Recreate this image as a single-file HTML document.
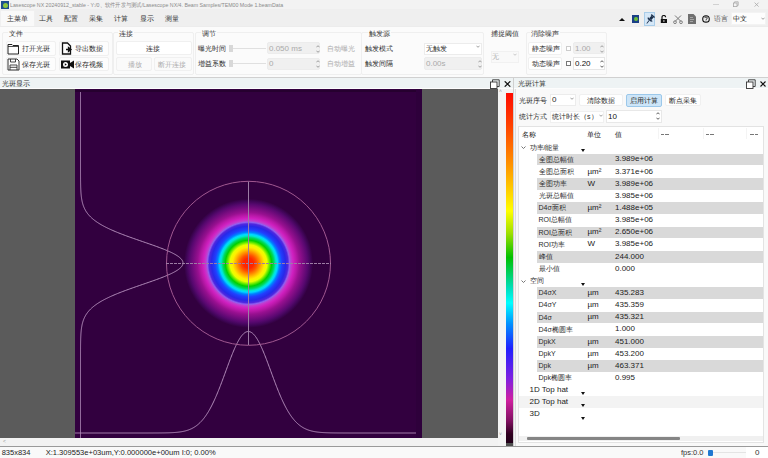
<!DOCTYPE html>
<html><head><meta charset="utf-8">
<style>
*{margin:0;padding:0;box-sizing:border-box}
html,body{width:768px;height:458px;overflow:hidden;background:#f3f3f3;font-family:"Liberation Sans",sans-serif;font-size:8px;color:#222}
.a{position:absolute}
.t{position:absolute;white-space:nowrap;line-height:1}
.gb{border:1px solid #efefef;border-radius:2px}
.lbl{font-size:7px;color:#333;background:#fbfbfb;padding:0 1px}
.btn{border:1px solid #f0f0f0;background:#fdfdfd;border-radius:2px}
.bt{font-size:7px;color:#2a2a2a}
.dis{color:#aaa}
.spin{background:#f0f0f0;border:1px solid #ececec;border-radius:2px}
.arr{font-size:6px;color:#888}
i{font-style:normal;display:inline-block;width:1em;text-align:center}
</style></head><body>
<!-- title bar -->
<div class="a" style="left:0;top:0;width:768px;height:11px;background:#f3f3f3"></div>
<div class="a" style="left:1px;top:1px;width:8px;height:8px;background:#1d4f8f"></div>
<div class="a" style="left:2.5px;top:2.5px;width:5px;height:5px;border-radius:50%;background:#8cc63f"></div>
<div class="t" style="left:9.6px;top:2px;font-size:6px;color:#8a8a8a;transform:scaleX(0.875);transform-origin:0 0">Lasescope NX 20240912_stable - Y:/0<i>、</i><i>软</i><i>件</i><i>开</i><i>发</i><i>与</i><i>测</i><i>试</i>/Lasescope NX/4. Beam Samples/TEM00 Mode 1.beamData</div>
<svg class="a" style="left:700px;top:0" width="68" height="10" viewBox="0 0 68 10"><path d="M13 4.5h6" stroke="#c8c8c8" stroke-width="0.8"/><rect x="33.4" y="3" width="3.6" height="3.6" fill="none" stroke="#a8a8a8" stroke-width="0.8"/><path d="M34.6 3V1.8h3.6v3.6H37" fill="none" stroke="#a8a8a8" stroke-width="0.8"/><path d="M54.6 2.6l4 4M58.6 2.6l-4 4" stroke="#a8a8a8" stroke-width="0.8"/></svg>



<!-- menu bar -->
<div class="a" style="left:0;top:9px;width:768px;height:17px;background:#efefef"></div>
<div class="a" style="left:0;top:10px;width:35px;height:17px;background:#f9f9f9;border:1px solid #f0f0f0;border-bottom:none"></div>
<div class="t" style="left:7.3px;top:14.8px;font-size:7px;color:#333"><i>主</i><i>菜</i><i>单</i></div>
<div class="t" style="left:39px;top:14.8px;font-size:7px;color:#333"><i>工</i><i>具</i></div>
<div class="t" style="left:64px;top:14.8px;font-size:7px;color:#333"><i>配</i><i>置</i></div>
<div class="t" style="left:89px;top:14.8px;font-size:7px;color:#333"><i>采</i><i>集</i></div>
<div class="t" style="left:114px;top:14.8px;font-size:7px;color:#333"><i>计</i><i>算</i></div>
<div class="t" style="left:140px;top:14.8px;font-size:7px;color:#333"><i>显</i><i>示</i></div>
<div class="t" style="left:165px;top:14.8px;font-size:7px;color:#333"><i>测</i><i>量</i></div>

<!-- ribbon -->
<div class="a" style="left:0;top:26px;width:768px;height:52px;background:#fbfbfb;border-top:1px solid #ececec;border-bottom:1px solid #d0d0d0"></div>


<!-- ribbon groups -->
<div class="a gb" style="left:2px;top:32px;width:111px;height:43px"></div>
<div class="t lbl" style="left:8px;top:30px"><i>文</i><i>件</i></div>
<div class="a btn" style="left:6px;top:41px;width:50px;height:15px"></div>
<div class="a btn" style="left:59px;top:41px;width:50px;height:15px"></div>
<div class="a btn" style="left:6px;top:57px;width:50px;height:14px"></div>
<div class="a btn" style="left:59px;top:57px;width:50px;height:14px"></div>
<svg class="a" style="left:7px;top:42px" width="13" height="13" viewBox="0 0 13 13"><path d="M1 2.5h4l1 1h5.5v8.5H1z" fill="none" stroke="#222" stroke-width="1"/><path d="M1 4.5h11" stroke="#222" stroke-width="0.8"/></svg>
<div class="t bt" style="left:22px;top:45px"><i>打</i><i>开</i><i>光</i><i>斑</i></div>
<svg class="a" style="left:61px;top:42px" width="12" height="13" viewBox="0 0 12 13"><path d="M1.5 1h5l3 3v8H1.5z" fill="none" stroke="#111" stroke-width="1.3"/><path d="M5 7.5h4M7.5 5.5l2.5 2-2.5 2z" stroke="#111" stroke-width="1.3" fill="#111"/></svg>
<div class="t bt" style="left:75px;top:45px"><i>导</i><i>出</i><i>数</i><i>据</i></div>
<svg class="a" style="left:7px;top:58px" width="13" height="13" viewBox="0 0 13 13"><path d="M1 1h9l2 2v9H1z" fill="none" stroke="#333" stroke-width="1"/><path d="M3.5 1v3h5V1M3 7h7v5M3 7v5M3 9.3h7" fill="none" stroke="#333" stroke-width="0.9"/></svg>
<div class="t bt" style="left:22px;top:61px"><i>保</i><i>存</i><i>光</i><i>斑</i></div>
<svg class="a" style="left:61px;top:60px" width="13" height="9" viewBox="0 0 13 9"><rect x="0" y="0.5" width="9" height="8" fill="#111"/><path d="M9 3l4-2.5v8L9 6z" fill="#111"/><circle cx="4.5" cy="4.5" r="2.5" fill="#fff"/><path d="M3.8 3.2v2.6l2-1.3z" fill="#111"/></svg>
<div class="t bt" style="left:75px;top:61px"><i>保</i><i>存</i><i>视</i><i>频</i></div>

<div class="a gb" style="left:113px;top:32px;width:81px;height:43px"></div>
<div class="t lbl" style="left:118px;top:30px"><i>连</i><i>接</i></div>
<div class="a btn" style="left:116px;top:41px;width:76px;height:14px;background:#fff"></div>
<div class="t bt" style="left:146px;top:45px"><i>连</i><i>接</i></div>
<div class="a btn" style="left:116px;top:57px;width:36px;height:14px;background:#fafafa"></div>
<div class="a btn" style="left:154px;top:57px;width:38px;height:14px;background:#fafafa"></div>
<div class="t bt dis" style="left:128px;top:61px"><i>播</i><i>放</i></div>
<div class="t bt dis" style="left:158px;top:61px"><i>断</i><i>开</i><i>连</i><i>接</i></div>

<div class="a gb" style="left:195px;top:32px;width:167px;height:43px"></div>
<div class="t lbl" style="left:201px;top:30px"><i>调</i><i>节</i></div>
<div class="t bt" style="left:198px;top:45px"><i>曝</i><i>光</i><i>时</i><i>间</i></div>
<div class="t bt" style="left:198px;top:60px"><i>增</i><i>益</i><i>系</i><i>数</i></div>
<div class="a" style="left:229px;top:45px;width:4px;height:7px;background:#d8d8d8"></div>
<div class="a" style="left:233px;top:48px;width:33px;height:1px;background:#e0e0e0"></div>
<div class="a" style="left:229px;top:60px;width:4px;height:7px;background:#d8d8d8"></div>
<div class="a" style="left:233px;top:63px;width:33px;height:1px;background:#e0e0e0"></div>
<div class="a spin" style="left:267px;top:42px;width:53px;height:12px"></div>
<div class="t bt dis" style="left:269px;top:45px;font-size:8px">0.050 ms</div>
<div class="a spin" style="left:267px;top:58px;width:53px;height:12px"></div>
<div class="t bt dis" style="left:269px;top:60px;font-size:8px">0</div>
<svg class="a" style="left:315.5px;top:45.0px" width="4" height="3" viewBox="0 0 4 3"><path d="M.4 2.3L2 .7l1.6 1.6" fill="none" stroke="#888" stroke-width="0.8"/></svg><svg class="a" style="left:315.5px;top:50.0px" width="4" height="3" viewBox="0 0 4 3"><path d="M.4 .7L2 2.3l1.6-1.6" fill="none" stroke="#888" stroke-width="0.8"/></svg>
<svg class="a" style="left:315.5px;top:60.0px" width="4" height="3" viewBox="0 0 4 3"><path d="M.4 2.3L2 .7l1.6 1.6" fill="none" stroke="#888" stroke-width="0.8"/></svg><svg class="a" style="left:315.5px;top:65.0px" width="4" height="3" viewBox="0 0 4 3"><path d="M.4 .7L2 2.3l1.6-1.6" fill="none" stroke="#888" stroke-width="0.8"/></svg>
<div class="t bt dis" style="left:327px;top:45px"><i>自</i><i>动</i><i>曝</i><i>光</i></div>
<div class="t bt dis" style="left:327px;top:60px"><i>自</i><i>动</i><i>增</i><i>益</i></div>

<div class="a gb" style="left:361px;top:32px;width:123px;height:43px"></div>
<div class="t lbl" style="left:368px;top:30px"><i>触</i><i>发</i><i>源</i></div>
<div class="t bt" style="left:365px;top:45px"><i>触</i><i>发</i><i>模</i><i>式</i></div>
<div class="t bt" style="left:365px;top:60px"><i>触</i><i>发</i><i>间</i><i>隔</i></div>
<div class="a" style="left:424px;top:43px;width:58px;height:12px;background:#fff;border:1px solid #ececec"></div>
<div class="t bt" style="left:426px;top:45px"><i>无</i><i>触</i><i>发</i></div>
<svg class="a" style="left:475.5px;top:45.0px" width="4" height="3" viewBox="0 0 4 3"><path d="M.4 .7L2 2.3l1.6-1.6" fill="none" stroke="#888" stroke-width="0.8"/></svg>
<div class="a spin" style="left:424px;top:57px;width:58px;height:13px"></div>
<div class="t bt dis" style="left:426px;top:60px;font-size:8px">0.00s</div>
<svg class="a" style="left:477.5px;top:60.0px" width="4" height="3" viewBox="0 0 4 3"><path d="M.4 2.3L2 .7l1.6 1.6" fill="none" stroke="#888" stroke-width="0.8"/></svg><svg class="a" style="left:477.5px;top:65.0px" width="4" height="3" viewBox="0 0 4 3"><path d="M.4 .7L2 2.3l1.6-1.6" fill="none" stroke="#888" stroke-width="0.8"/></svg>

<div class="t lbl" style="left:490px;top:30px"><i>捕</i><i>捉</i><i>阈</i><i>值</i></div>
<div class="a" style="left:491px;top:51px;width:28px;height:12px;background:#f9f9f9;border:1px solid #f1f1f1"></div>
<div class="t bt dis" style="left:492px;top:53px"><i>无</i></div>
<svg class="a" style="left:512.5px;top:53.0px" width="4" height="3" viewBox="0 0 4 3"><path d="M.4 .7L2 2.3l1.6-1.6" fill="none" stroke="#bbb" stroke-width="0.8"/></svg>

<div class="a gb" style="left:526px;top:32px;width:81px;height:43px"></div>
<div class="t lbl" style="left:530px;top:30px"><i>消</i><i>除</i><i>噪</i><i>声</i></div>
<div class="a btn" style="left:528px;top:42px;width:34px;height:13px;background:#fff"></div>
<div class="a btn" style="left:528px;top:57px;width:34px;height:13px;background:#fff"></div>
<div class="t bt" style="left:532px;top:45px"><i>静</i><i>态</i><i>噪</i><i>声</i></div>
<div class="t bt" style="left:532px;top:60px"><i>动</i><i>态</i><i>噪</i><i>声</i></div>
<div class="a" style="left:565.5px;top:46px;width:5px;height:5px;border:0.8px solid #ccc;background:#fff"></div>
<div class="a" style="left:565.5px;top:61px;width:5px;height:5px;border:0.8px solid #777;background:#fff"></div>
<div class="a spin" style="left:573px;top:42px;width:32px;height:12px"></div>
<div class="t bt dis" style="left:575px;top:45px;font-size:8px">1.00</div>
<div class="a" style="left:573px;top:57px;width:32px;height:13px;background:#fff;border:1px solid #e6e6e6"></div>
<div class="t bt" style="left:575px;top:60px;font-size:8px;color:#111">0.20</div>
<svg class="a" style="left:599.5px;top:45.0px" width="4" height="3" viewBox="0 0 4 3"><path d="M.4 2.3L2 .7l1.6 1.6" fill="none" stroke="#888" stroke-width="0.8"/></svg><svg class="a" style="left:599.5px;top:50.0px" width="4" height="3" viewBox="0 0 4 3"><path d="M.4 .7L2 2.3l1.6-1.6" fill="none" stroke="#888" stroke-width="0.8"/></svg>
<svg class="a" style="left:599.5px;top:60.0px" width="4" height="3" viewBox="0 0 4 3"><path d="M.4 2.3L2 .7l1.6 1.6" fill="none" stroke="#333" stroke-width="0.8"/></svg><svg class="a" style="left:599.5px;top:65.0px" width="4" height="3" viewBox="0 0 4 3"><path d="M.4 .7L2 2.3l1.6-1.6" fill="none" stroke="#333" stroke-width="0.8"/></svg>

<!-- left dock header -->
<div class="a" style="left:0;top:78px;width:513px;height:10px;background:#eef3f4"></div>
<div class="t" style="left:2.3px;top:80px;font-size:7px;color:#333"><i>光</i><i>斑</i><i>显</i><i>示</i></div>
<!-- right dock header -->
<div class="a" style="left:514px;top:78px;width:254px;height:10px;background:#eef3f4"></div>
<div class="t" style="left:517.5px;top:80px;font-size:7px;color:#333"><i>光</i><i>斑</i><i>计</i><i>算</i></div>

<!-- display -->
<div class="a" style="left:0;top:88px;width:768px;height:1px;background:#fdfdfd"></div>
<div class="a" style="left:0;top:89px;width:498px;height:349px;background:#5b5b5b"></div>
<div class="a" style="left:75px;top:89px;width:347px;height:349px;background:#32003f"></div>

<div class="a" style="left:75px;top:89px;width:347px;height:349px;background:radial-gradient(circle at 173.5px 174.3px,#ff2000 0px,#ff2800 5px,#ff5000 8px,#ff8c00 11px,#ffc000 13.5px,#ffee00 16px,#e8ff00 18.5px,#60e800 21px,#00d000 23px,#00d860 25.5px,#00e8d0 27.5px,#00d8ff 29px,#0080ff 31px,#2040ff 33.5px,#2828e8 37px,#5028e0 39.5px,#9060f0 41px,#c040d0 42.5px,#d020c0 45px,#b818a8 48px,#981090 51px,#780c80 55px,#580870 59px,#400558 62px,#32003f 64.5px)"></div>
<svg class="a" style="left:0;top:0" width="768" height="458" viewBox="0 0 768 458">
<g fill="none">
<path d="M80.50 90.0 L80.50 90.5 L80.50 91.0 L80.50 91.5 L80.50 92.0 L80.50 92.5 L80.50 93.0 L80.50 93.5 L80.50 94.0 L80.50 94.5 L80.50 95.0 L80.50 95.5 L80.50 96.0 L80.50 96.5 L80.50 97.0 L80.50 97.5 L80.50 98.0 L80.50 98.5 L80.50 99.0 L80.50 99.5 L80.50 100.0 L80.50 100.5 L80.50 101.0 L80.50 101.5 L80.50 102.0 L80.50 102.5 L80.50 103.0 L80.50 103.5 L80.50 104.0 L80.50 104.5 L80.50 105.0 L80.50 105.5 L80.50 106.0 L80.50 106.5 L80.50 107.0 L80.50 107.5 L80.50 108.0 L80.50 108.5 L80.50 109.0 L80.50 109.5 L80.50 110.0 L80.50 110.5 L80.50 111.0 L80.50 111.5 L80.50 112.0 L80.50 112.5 L80.50 113.0 L80.50 113.5 L80.50 114.0 L80.50 114.5 L80.50 115.0 L80.50 115.5 L80.50 116.0 L80.50 116.5 L80.50 117.0 L80.50 117.5 L80.50 118.0 L80.50 118.5 L80.50 119.0 L80.50 119.5 L80.50 120.0 L80.50 120.5 L80.50 121.0 L80.50 121.5 L80.50 122.0 L80.50 122.5 L80.50 123.0 L80.50 123.5 L80.50 124.0 L80.50 124.5 L80.50 125.0 L80.50 125.5 L80.50 126.0 L80.50 126.5 L80.50 127.0 L80.50 127.5 L80.50 128.0 L80.50 128.5 L80.50 129.0 L80.50 129.5 L80.50 130.0 L80.50 130.5 L80.50 131.0 L80.50 131.5 L80.50 132.0 L80.50 132.5 L80.50 133.0 L80.50 133.5 L80.50 134.0 L80.50 134.5 L80.50 135.0 L80.50 135.5 L80.50 136.0 L80.50 136.5 L80.50 137.0 L80.50 137.5 L80.50 138.0 L80.50 138.5 L80.50 139.0 L80.50 139.5 L80.50 140.0 L80.50 140.5 L80.50 141.0 L80.50 141.5 L80.50 142.0 L80.50 142.5 L80.50 143.0 L80.50 143.5 L80.50 144.0 L80.50 144.5 L80.50 145.0 L80.50 145.5 L80.50 146.0 L80.50 146.5 L80.50 147.0 L80.50 147.5 L80.50 148.0 L80.50 148.5 L80.50 149.0 L80.50 149.5 L80.50 150.0 L80.50 150.5 L80.50 151.0 L80.50 151.5 L80.50 152.0 L80.50 152.5 L80.50 153.0 L80.50 153.5 L80.50 154.0 L80.50 154.5 L80.50 155.0 L80.50 155.5 L80.50 156.0 L80.50 156.5 L80.50 157.0 L80.50 157.5 L80.50 158.0 L80.50 158.5 L80.50 159.0 L80.50 159.5 L80.50 160.0 L80.50 160.5 L80.50 161.0 L80.50 161.5 L80.50 162.0 L80.50 162.5 L80.50 163.0 L80.50 163.5 L80.50 164.0 L80.50 164.5 L80.50 165.0 L80.50 165.5 L80.50 166.0 L80.50 166.5 L80.50 167.0 L80.50 167.5 L80.51 168.0 L80.51 168.5 L80.51 169.0 L80.51 169.5 L80.51 170.0 L80.51 170.5 L80.51 171.0 L80.51 171.5 L80.51 172.0 L80.51 172.5 L80.51 173.0 L80.52 173.5 L80.52 174.0 L80.52 174.5 L80.52 175.0 L80.52 175.5 L80.53 176.0 L80.53 176.5 L80.53 177.0 L80.54 177.5 L80.54 178.0 L80.54 178.5 L80.55 179.0 L80.55 179.5 L80.56 180.0 L80.56 180.5 L80.57 181.0 L80.57 181.5 L80.58 182.0 L80.59 182.5 L80.59 183.0 L80.60 183.5 L80.61 184.0 L80.62 184.5 L80.63 185.0 L80.65 185.5 L80.66 186.0 L80.67 186.5 L80.69 187.0 L80.70 187.5 L80.72 188.0 L80.74 188.5 L80.76 189.0 L80.78 189.5 L80.80 190.0 L80.83 190.5 L80.86 191.0 L80.89 191.5 L80.92 192.0 L80.95 192.5 L80.99 193.0 L81.03 193.5 L81.07 194.0 L81.11 194.5 L81.16 195.0 L81.21 195.5 L81.26 196.0 L81.32 196.5 L81.38 197.0 L81.45 197.5 L81.52 198.0 L81.59 198.5 L81.67 199.0 L81.76 199.5 L81.85 200.0 L81.94 200.5 L82.04 201.0 L82.15 201.5 L82.26 202.0 L82.38 202.5 L82.51 203.0 L82.65 203.5 L82.79 204.0 L82.94 204.5 L83.10 205.0 L83.27 205.5 L83.45 206.0 L83.64 206.5 L83.84 207.0 L84.05 207.5 L84.27 208.0 L84.50 208.5 L84.75 209.0 L85.00 209.5 L85.27 210.0 L85.56 210.5 L85.85 211.0 L86.16 211.5 L86.49 212.0 L86.83 212.5 L87.19 213.0 L87.56 213.5 L87.95 214.0 L88.36 214.5 L88.78 215.0 L89.23 215.5 L89.69 216.0 L90.17 216.5 L90.67 217.0 L91.19 217.5 L91.73 218.0 L92.30 218.5 L92.88 219.0 L93.49 219.5 L94.11 220.0 L94.76 220.5 L95.44 221.0 L96.14 221.5 L96.86 222.0 L97.60 222.5 L98.37 223.0 L99.16 223.5 L99.98 224.0 L100.82 224.5 L101.69 225.0 L102.58 225.5 L103.49 226.0 L104.43 226.5 L105.40 227.0 L106.39 227.5 L107.41 228.0 L108.45 228.5 L109.51 229.0 L110.60 229.5 L111.71 230.0 L112.85 230.5 L114.01 231.0 L115.19 231.5 L116.40 232.0 L117.62 232.5 L118.87 233.0 L120.14 233.5 L121.42 234.0 L122.73 234.5 L124.05 235.0 L125.39 235.5 L126.74 236.0 L128.11 236.5 L129.50 237.0 L130.90 237.5 L132.31 238.0 L133.72 238.5 L135.15 239.0 L136.59 239.5 L138.03 240.0 L139.48 240.5 L140.93 241.0 L142.38 241.5 L143.83 242.0 L145.28 242.5 L146.73 243.0 L148.17 243.5 L149.61 244.0 L151.04 244.5 L152.46 245.0 L153.87 245.5 L155.26 246.0 L156.64 246.5 L158.01 247.0 L159.35 247.5 L160.67 248.0 L161.98 248.5 L163.25 249.0 L164.51 249.5 L165.73 250.0 L166.92 250.5 L168.09 251.0 L169.22 251.5 L170.32 252.0 L171.38 252.5 L172.40 253.0 L173.38 253.5 L174.32 254.0 L175.23 254.5 L176.08 255.0 L176.89 255.5 L177.66 256.0 L178.38 256.5 L179.05 257.0 L179.67 257.5 L180.24 258.0 L180.76 258.5 L181.22 259.0 L181.64 259.5 L182.00 260.0 L182.30 260.5 L182.55 261.0 L182.75 261.5 L182.89 262.0 L182.97 262.5 L183.00 263.0 L182.97 263.5 L182.89 264.0 L182.75 264.5 L182.55 265.0 L182.30 265.5 L182.00 266.0 L181.64 266.5 L181.22 267.0 L180.76 267.5 L180.24 268.0 L179.67 268.5 L179.05 269.0 L178.38 269.5 L177.66 270.0 L176.89 270.5 L176.08 271.0 L175.23 271.5 L174.32 272.0 L173.38 272.5 L172.40 273.0 L171.38 273.5 L170.32 274.0 L169.22 274.5 L168.09 275.0 L166.92 275.5 L165.73 276.0 L164.51 276.5 L163.25 277.0 L161.98 277.5 L160.67 278.0 L159.35 278.5 L158.01 279.0 L156.64 279.5 L155.26 280.0 L153.87 280.5 L152.46 281.0 L151.04 281.5 L149.61 282.0 L148.17 282.5 L146.73 283.0 L145.28 283.5 L143.83 284.0 L142.38 284.5 L140.93 285.0 L139.48 285.5 L138.03 286.0 L136.59 286.5 L135.15 287.0 L133.72 287.5 L132.31 288.0 L130.90 288.5 L129.50 289.0 L128.11 289.5 L126.74 290.0 L125.39 290.5 L124.05 291.0 L122.73 291.5 L121.42 292.0 L120.14 292.5 L118.87 293.0 L117.62 293.5 L116.40 294.0 L115.19 294.5 L114.01 295.0 L112.85 295.5 L111.71 296.0 L110.60 296.5 L109.51 297.0 L108.45 297.5 L107.41 298.0 L106.39 298.5 L105.40 299.0 L104.43 299.5 L103.49 300.0 L102.58 300.5 L101.69 301.0 L100.82 301.5 L99.98 302.0 L99.16 302.5 L98.37 303.0 L97.60 303.5 L96.86 304.0 L96.14 304.5 L95.44 305.0 L94.76 305.5 L94.11 306.0 L93.49 306.5 L92.88 307.0 L92.30 307.5 L91.73 308.0 L91.19 308.5 L90.67 309.0 L90.17 309.5 L89.69 310.0 L89.23 310.5 L88.78 311.0 L88.36 311.5 L87.95 312.0 L87.56 312.5 L87.19 313.0 L86.83 313.5 L86.49 314.0 L86.16 314.5 L85.85 315.0 L85.56 315.5 L85.27 316.0 L85.00 316.5 L84.75 317.0 L84.50 317.5 L84.27 318.0 L84.05 318.5 L83.84 319.0 L83.64 319.5 L83.45 320.0 L83.27 320.5 L83.10 321.0 L82.94 321.5 L82.79 322.0 L82.65 322.5 L82.51 323.0 L82.38 323.5 L82.26 324.0 L82.15 324.5 L82.04 325.0 L81.94 325.5 L81.85 326.0 L81.76 326.5 L81.67 327.0 L81.59 327.5 L81.52 328.0 L81.45 328.5 L81.38 329.0 L81.32 329.5 L81.26 330.0 L81.21 330.5 L81.16 331.0 L81.11 331.5 L81.07 332.0 L81.03 332.5 L80.99 333.0 L80.95 333.5 L80.92 334.0 L80.89 334.5 L80.86 335.0 L80.83 335.5 L80.80 336.0 L80.78 336.5 L80.76 337.0 L80.74 337.5 L80.72 338.0 L80.70 338.5 L80.69 339.0 L80.67 339.5 L80.66 340.0 L80.65 340.5 L80.63 341.0 L80.62 341.5 L80.61 342.0 L80.60 342.5 L80.59 343.0 L80.59 343.5 L80.58 344.0 L80.57 344.5 L80.57 345.0 L80.56 345.5 L80.56 346.0 L80.55 346.5 L80.55 347.0 L80.54 347.5 L80.54 348.0 L80.54 348.5 L80.53 349.0 L80.53 349.5 L80.53 350.0 L80.52 350.5 L80.52 351.0 L80.52 351.5 L80.52 352.0 L80.52 352.5 L80.51 353.0 L80.51 353.5 L80.51 354.0 L80.51 354.5 L80.51 355.0 L80.51 355.5 L80.51 356.0 L80.51 356.5 L80.51 357.0 L80.51 357.5 L80.51 358.0 L80.50 358.5 L80.50 359.0 L80.50 359.5 L80.50 360.0 L80.50 360.5 L80.50 361.0 L80.50 361.5 L80.50 362.0 L80.50 362.5 L80.50 363.0 L80.50 363.5 L80.50 364.0 L80.50 364.5 L80.50 365.0 L80.50 365.5 L80.50 366.0 L80.50 366.5 L80.50 367.0 L80.50 367.5 L80.50 368.0 L80.50 368.5 L80.50 369.0 L80.50 369.5 L80.50 370.0 L80.50 370.5 L80.50 371.0 L80.50 371.5 L80.50 372.0 L80.50 372.5 L80.50 373.0 L80.50 373.5 L80.50 374.0 L80.50 374.5 L80.50 375.0 L80.50 375.5 L80.50 376.0 L80.50 376.5 L80.50 377.0 L80.50 377.5 L80.50 378.0 L80.50 378.5 L80.50 379.0 L80.50 379.5 L80.50 380.0 L80.50 380.5 L80.50 381.0 L80.50 381.5 L80.50 382.0 L80.50 382.5 L80.50 383.0 L80.50 383.5 L80.50 384.0 L80.50 384.5 L80.50 385.0 L80.50 385.5 L80.50 386.0 L80.50 386.5 L80.50 387.0 L80.50 387.5 L80.50 388.0 L80.50 388.5 L80.50 389.0 L80.50 389.5 L80.50 390.0 L80.50 390.5 L80.50 391.0 L80.50 391.5 L80.50 392.0 L80.50 392.5 L80.50 393.0 L80.50 393.5 L80.50 394.0 L80.50 394.5 L80.50 395.0 L80.50 395.5 L80.50 396.0 L80.50 396.5 L80.50 397.0 L80.50 397.5 L80.50 398.0 L80.50 398.5 L80.50 399.0 L80.50 399.5 L80.50 400.0 L80.50 400.5 L80.50 401.0 L80.50 401.5 L80.50 402.0 L80.50 402.5 L80.50 403.0 L80.50 403.5 L80.50 404.0 L80.50 404.5 L80.50 405.0 L80.50 405.5 L80.50 406.0 L80.50 406.5 L80.50 407.0 L80.50 407.5 L80.50 408.0 L80.50 408.5 L80.50 409.0 L80.50 409.5 L80.50 410.0 L80.50 410.5 L80.50 411.0 L80.50 411.5 L80.50 412.0 L80.50 412.5 L80.50 413.0 L80.50 413.5 L80.50 414.0 L80.50 414.5 L80.50 415.0 L80.50 415.5 L80.50 416.0 L80.50 416.5 L80.50 417.0 L80.50 417.5 L80.50 418.0 L80.50 418.5 L80.50 419.0 L80.50 419.5 L80.50 420.0 L80.50 420.5 L80.50 421.0 L80.50 421.5 L80.50 422.0 L80.50 422.5 L80.50 423.0 L80.50 423.5 L80.50 424.0 L80.50 424.5 L80.50 425.0 L80.50 425.5 L80.50 426.0 L80.50 426.5 L80.50 427.0 L80.50 427.5 L80.50 428.0 L80.50 428.5 L80.50 429.0 L80.50 429.5 L80.50 430.0 L80.50 430.5 L80.50 431.0 L80.50 431.5 L80.50 432.0 L80.50 432.5 L80.50 433.0 L80.50 433.5 L80.50 434.0 L80.50 434.5 L80.50 435.0 L80.50 435.5 L80.50 436.0 L80.50 436.5 L80.50 437.0 L80.50 437.5 L80.50 438.0" stroke="#b894c0" stroke-width="0.95"/>
<path d="M75.0 433.00 L75.5 433.00 L76.0 433.00 L76.5 433.00 L77.0 433.00 L77.5 433.00 L78.0 433.00 L78.5 433.00 L79.0 433.00 L79.5 433.00 L80.0 433.00 L80.5 433.00 L81.0 433.00 L81.5 433.00 L82.0 433.00 L82.5 433.00 L83.0 433.00 L83.5 433.00 L84.0 433.00 L84.5 433.00 L85.0 433.00 L85.5 433.00 L86.0 433.00 L86.5 433.00 L87.0 433.00 L87.5 433.00 L88.0 433.00 L88.5 433.00 L89.0 433.00 L89.5 433.00 L90.0 433.00 L90.5 433.00 L91.0 433.00 L91.5 433.00 L92.0 433.00 L92.5 433.00 L93.0 433.00 L93.5 433.00 L94.0 433.00 L94.5 433.00 L95.0 433.00 L95.5 433.00 L96.0 433.00 L96.5 433.00 L97.0 433.00 L97.5 433.00 L98.0 433.00 L98.5 433.00 L99.0 433.00 L99.5 433.00 L100.0 433.00 L100.5 433.00 L101.0 433.00 L101.5 433.00 L102.0 433.00 L102.5 433.00 L103.0 433.00 L103.5 433.00 L104.0 433.00 L104.5 433.00 L105.0 433.00 L105.5 433.00 L106.0 433.00 L106.5 433.00 L107.0 433.00 L107.5 433.00 L108.0 433.00 L108.5 433.00 L109.0 433.00 L109.5 433.00 L110.0 433.00 L110.5 433.00 L111.0 433.00 L111.5 433.00 L112.0 433.00 L112.5 433.00 L113.0 433.00 L113.5 433.00 L114.0 433.00 L114.5 433.00 L115.0 433.00 L115.5 433.00 L116.0 433.00 L116.5 433.00 L117.0 433.00 L117.5 433.00 L118.0 433.00 L118.5 433.00 L119.0 433.00 L119.5 433.00 L120.0 433.00 L120.5 433.00 L121.0 433.00 L121.5 433.00 L122.0 433.00 L122.5 433.00 L123.0 433.00 L123.5 433.00 L124.0 433.00 L124.5 433.00 L125.0 433.00 L125.5 433.00 L126.0 433.00 L126.5 433.00 L127.0 433.00 L127.5 433.00 L128.0 433.00 L128.5 433.00 L129.0 433.00 L129.5 433.00 L130.0 433.00 L130.5 433.00 L131.0 433.00 L131.5 433.00 L132.0 433.00 L132.5 433.00 L133.0 433.00 L133.5 433.00 L134.0 433.00 L134.5 433.00 L135.0 433.00 L135.5 433.00 L136.0 433.00 L136.5 433.00 L137.0 433.00 L137.5 433.00 L138.0 433.00 L138.5 433.00 L139.0 433.00 L139.5 433.00 L140.0 433.00 L140.5 433.00 L141.0 433.00 L141.5 433.00 L142.0 433.00 L142.5 433.00 L143.0 433.00 L143.5 433.00 L144.0 433.00 L144.5 433.00 L145.0 433.00 L145.5 433.00 L146.0 433.00 L146.5 433.00 L147.0 433.00 L147.5 433.00 L148.0 432.99 L148.5 432.99 L149.0 432.99 L149.5 432.99 L150.0 432.99 L150.5 432.99 L151.0 432.99 L151.5 432.99 L152.0 432.99 L152.5 432.99 L153.0 432.99 L153.5 432.98 L154.0 432.98 L154.5 432.98 L155.0 432.98 L155.5 432.98 L156.0 432.98 L156.5 432.97 L157.0 432.97 L157.5 432.97 L158.0 432.97 L158.5 432.96 L159.0 432.96 L159.5 432.95 L160.0 432.95 L160.5 432.95 L161.0 432.94 L161.5 432.94 L162.0 432.93 L162.5 432.92 L163.0 432.92 L163.5 432.91 L164.0 432.90 L164.5 432.90 L165.0 432.89 L165.5 432.88 L166.0 432.87 L166.5 432.85 L167.0 432.84 L167.5 432.83 L168.0 432.82 L168.5 432.80 L169.0 432.78 L169.5 432.77 L170.0 432.75 L170.5 432.73 L171.0 432.71 L171.5 432.68 L172.0 432.66 L172.5 432.63 L173.0 432.61 L173.5 432.58 L174.0 432.54 L174.5 432.51 L175.0 432.47 L175.5 432.43 L176.0 432.39 L176.5 432.35 L177.0 432.30 L177.5 432.25 L178.0 432.20 L178.5 432.14 L179.0 432.08 L179.5 432.01 L180.0 431.95 L180.5 431.87 L181.0 431.80 L181.5 431.71 L182.0 431.63 L182.5 431.54 L183.0 431.44 L183.5 431.34 L184.0 431.23 L184.5 431.11 L185.0 430.99 L185.5 430.86 L186.0 430.73 L186.5 430.59 L187.0 430.44 L187.5 430.28 L188.0 430.11 L188.5 429.94 L189.0 429.75 L189.5 429.56 L190.0 429.36 L190.5 429.14 L191.0 428.92 L191.5 428.69 L192.0 428.44 L192.5 428.18 L193.0 427.91 L193.5 427.63 L194.0 427.34 L194.5 427.03 L195.0 426.71 L195.5 426.37 L196.0 426.02 L196.5 425.66 L197.0 425.28 L197.5 424.88 L198.0 424.47 L198.5 424.04 L199.0 423.60 L199.5 423.14 L200.0 422.66 L200.5 422.16 L201.0 421.64 L201.5 421.11 L202.0 420.55 L202.5 419.98 L203.0 419.38 L203.5 418.77 L204.0 418.14 L204.5 417.48 L205.0 416.81 L205.5 416.11 L206.0 415.39 L206.5 414.65 L207.0 413.89 L207.5 413.10 L208.0 412.30 L208.5 411.47 L209.0 410.62 L209.5 409.75 L210.0 408.86 L210.5 407.94 L211.0 407.00 L211.5 406.04 L212.0 405.06 L212.5 404.05 L213.0 403.03 L213.5 401.98 L214.0 400.92 L214.5 399.83 L215.0 398.72 L215.5 397.59 L216.0 396.45 L216.5 395.28 L217.0 394.10 L217.5 392.90 L218.0 391.68 L218.5 390.45 L219.0 389.20 L219.5 387.94 L220.0 386.66 L220.5 385.37 L221.0 384.07 L221.5 382.75 L222.0 381.43 L222.5 380.10 L223.0 378.76 L223.5 377.41 L224.0 376.06 L224.5 374.70 L225.0 373.34 L225.5 371.98 L226.0 370.62 L226.5 369.26 L227.0 367.90 L227.5 366.54 L228.0 365.19 L228.5 363.85 L229.0 362.51 L229.5 361.19 L230.0 359.87 L230.5 358.57 L231.0 357.28 L231.5 356.00 L232.0 354.75 L232.5 353.51 L233.0 352.29 L233.5 351.09 L234.0 349.91 L234.5 348.76 L235.0 347.64 L235.5 346.54 L236.0 345.47 L236.5 344.43 L237.0 343.43 L237.5 342.45 L238.0 341.51 L238.5 340.61 L239.0 339.74 L239.5 338.91 L240.0 338.12 L240.5 337.37 L241.0 336.66 L241.5 335.99 L242.0 335.37 L242.5 334.79 L243.0 334.25 L243.5 333.76 L244.0 333.32 L244.5 332.92 L245.0 332.58 L245.5 332.28 L246.0 332.02 L246.5 331.82 L247.0 331.67 L247.5 331.56 L248.0 331.51 L248.5 331.50 L249.0 331.55 L249.5 331.64 L250.0 331.79 L250.5 331.98 L251.0 332.22 L251.5 332.51 L252.0 332.85 L252.5 333.24 L253.0 333.67 L253.5 334.15 L254.0 334.68 L254.5 335.25 L255.0 335.86 L255.5 336.52 L256.0 337.22 L256.5 337.97 L257.0 338.75 L257.5 339.57 L258.0 340.43 L258.5 341.33 L259.0 342.26 L259.5 343.23 L260.0 344.23 L260.5 345.26 L261.0 346.32 L261.5 347.42 L262.0 348.54 L262.5 349.68 L263.0 350.85 L263.5 352.05 L264.0 353.26 L264.5 354.50 L265.0 355.75 L265.5 357.02 L266.0 358.31 L266.5 359.61 L267.0 360.92 L267.5 362.25 L268.0 363.58 L268.5 364.92 L269.0 366.27 L269.5 367.63 L270.0 368.99 L270.5 370.35 L271.0 371.71 L271.5 373.07 L272.0 374.43 L272.5 375.79 L273.0 377.14 L273.5 378.49 L274.0 379.83 L274.5 381.16 L275.0 382.49 L275.5 383.80 L276.0 385.11 L276.5 386.40 L277.0 387.68 L277.5 388.95 L278.0 390.20 L278.5 391.44 L279.0 392.66 L279.5 393.86 L280.0 395.05 L280.5 396.22 L281.0 397.37 L281.5 398.50 L282.0 399.61 L282.5 400.70 L283.0 401.77 L283.5 402.82 L284.0 403.85 L284.5 404.86 L285.0 405.85 L285.5 406.81 L286.0 407.75 L286.5 408.67 L287.0 409.57 L287.5 410.45 L288.0 411.30 L288.5 412.14 L289.0 412.95 L289.5 413.73 L290.0 414.50 L290.5 415.24 L291.0 415.97 L291.5 416.67 L292.0 417.35 L292.5 418.01 L293.0 418.65 L293.5 419.26 L294.0 419.86 L294.5 420.44 L295.0 421.00 L295.5 421.54 L296.0 422.06 L296.5 422.56 L297.0 423.04 L297.5 423.51 L298.0 423.96 L298.5 424.39 L299.0 424.80 L299.5 425.20 L300.0 425.59 L300.5 425.95 L301.0 426.31 L301.5 426.64 L302.0 426.97 L302.5 427.28 L303.0 427.58 L303.5 427.86 L304.0 428.13 L304.5 428.39 L305.0 428.64 L305.5 428.87 L306.0 429.10 L306.5 429.32 L307.0 429.52 L307.5 429.72 L308.0 429.90 L308.5 430.08 L309.0 430.25 L309.5 430.41 L310.0 430.56 L310.5 430.70 L311.0 430.84 L311.5 430.97 L312.0 431.09 L312.5 431.20 L313.0 431.31 L313.5 431.42 L314.0 431.52 L314.5 431.61 L315.0 431.70 L315.5 431.78 L316.0 431.86 L316.5 431.93 L317.0 432.00 L317.5 432.07 L318.0 432.13 L318.5 432.18 L319.0 432.24 L319.5 432.29 L320.0 432.34 L320.5 432.38 L321.0 432.43 L321.5 432.46 L322.0 432.50 L322.5 432.54 L323.0 432.57 L323.5 432.60 L324.0 432.63 L324.5 432.65 L325.0 432.68 L325.5 432.70 L326.0 432.72 L326.5 432.74 L327.0 432.76 L327.5 432.78 L328.0 432.80 L328.5 432.81 L329.0 432.83 L329.5 432.84 L330.0 432.85 L330.5 432.86 L331.0 432.87 L331.5 432.88 L332.0 432.89 L332.5 432.90 L333.0 432.91 L333.5 432.92 L334.0 432.92 L334.5 432.93 L335.0 432.94 L335.5 432.94 L336.0 432.95 L336.5 432.95 L337.0 432.95 L337.5 432.96 L338.0 432.96 L338.5 432.96 L339.0 432.97 L339.5 432.97 L340.0 432.97 L340.5 432.98 L341.0 432.98 L341.5 432.98 L342.0 432.98 L342.5 432.98 L343.0 432.98 L343.5 432.99 L344.0 432.99 L344.5 432.99 L345.0 432.99 L345.5 432.99 L346.0 432.99 L346.5 432.99 L347.0 432.99 L347.5 432.99 L348.0 432.99 L348.5 432.99 L349.0 433.00 L349.5 433.00 L350.0 433.00 L350.5 433.00 L351.0 433.00 L351.5 433.00 L352.0 433.00 L352.5 433.00 L353.0 433.00 L353.5 433.00 L354.0 433.00 L354.5 433.00 L355.0 433.00 L355.5 433.00 L356.0 433.00 L356.5 433.00 L357.0 433.00 L357.5 433.00 L358.0 433.00 L358.5 433.00 L359.0 433.00 L359.5 433.00 L360.0 433.00 L360.5 433.00 L361.0 433.00 L361.5 433.00 L362.0 433.00 L362.5 433.00 L363.0 433.00 L363.5 433.00 L364.0 433.00 L364.5 433.00 L365.0 433.00 L365.5 433.00 L366.0 433.00 L366.5 433.00 L367.0 433.00 L367.5 433.00 L368.0 433.00 L368.5 433.00 L369.0 433.00 L369.5 433.00 L370.0 433.00 L370.5 433.00 L371.0 433.00 L371.5 433.00 L372.0 433.00 L372.5 433.00 L373.0 433.00 L373.5 433.00 L374.0 433.00 L374.5 433.00 L375.0 433.00 L375.5 433.00 L376.0 433.00 L376.5 433.00 L377.0 433.00 L377.5 433.00 L378.0 433.00 L378.5 433.00 L379.0 433.00 L379.5 433.00 L380.0 433.00 L380.5 433.00 L381.0 433.00 L381.5 433.00 L382.0 433.00 L382.5 433.00 L383.0 433.00 L383.5 433.00 L384.0 433.00 L384.5 433.00 L385.0 433.00 L385.5 433.00 L386.0 433.00 L386.5 433.00 L387.0 433.00 L387.5 433.00 L388.0 433.00 L388.5 433.00 L389.0 433.00 L389.5 433.00 L390.0 433.00 L390.5 433.00 L391.0 433.00 L391.5 433.00 L392.0 433.00 L392.5 433.00 L393.0 433.00 L393.5 433.00 L394.0 433.00 L394.5 433.00 L395.0 433.00 L395.5 433.00 L396.0 433.00 L396.5 433.00 L397.0 433.00 L397.5 433.00 L398.0 433.00 L398.5 433.00 L399.0 433.00 L399.5 433.00 L400.0 433.00 L400.5 433.00 L401.0 433.00 L401.5 433.00 L402.0 433.00 L402.5 433.00 L403.0 433.00 L403.5 433.00 L404.0 433.00 L404.5 433.00 L405.0 433.00 L405.5 433.00 L406.0 433.00 L406.5 433.00 L407.0 433.00 L407.5 433.00 L408.0 433.00 L408.5 433.00 L409.0 433.00 L409.5 433.00 L410.0 433.00 L410.5 433.00 L411.0 433.00 L411.5 433.00 L412.0 433.00 L412.5 433.00 L413.0 433.00 L413.5 433.00 L414.0 433.00 L414.5 433.00 L415.0 433.00 L415.5 433.00 L416.0 433.00 L416.5 433.00 L417.0 433.00 L417.5 433.00 L418.0 433.00 L418.5 433.00 L419.0 433.00 L419.5 433.00 L420.0 433.00 L420.5 433.00 L421.0 433.00 L421.5 433.00 L422.0 433.00" stroke="#b894c0" stroke-width="0.95"/>
<circle cx="248.5" cy="263.3" r="82" stroke="#a05890" stroke-width="1"/>
<path d="M248.5 181.5V345" stroke="#9c7ca4" stroke-width="1"/>
<path d="M166 263.5H331" stroke="#9c7ca4" stroke-width="1" stroke-dasharray="3 1"/>
</g></svg>
<div class="a" style="left:75px;top:90px;width:347px;height:2px;background:#26002f"></div><div class="a" style="left:416px;top:89px;width:6px;height:349px;background:#2e003b"></div>
<div class="a" style="left:498px;top:89px;width:8px;height:357px;background:#f4f4f4"></div><div class="t" style="left:499px;top:89px;font-size:5px;color:#999">˄</div><div class="t" style="left:499px;top:432px;font-size:5px;color:#999">˅</div>
<div class="a" style="left:0;top:438px;width:498px;height:8px;background:#f2f2f2"></div><div class="t" style="left:3px;top:439px;font-size:5px;color:#999">˂</div>
<div class="a" style="left:506px;top:93px;width:7px;height:350px;background:linear-gradient(#ff0a00,#ff4000 9%,#ff9000 20%,#ffff00 33.7%,#a0e000 40%,#00c000 47%,#00e0c0 56%,#00ffff 60%,#0090ff 66%,#2020ff 73%,#8020e0 81.7%,#d020a0 87.7%,#801060 93.7%,#300020 97.4%,#200018 100%)"></div><div class="a" style="left:506px;top:443px;width:7px;height:3px;background:#505050"></div>

<!-- right panel -->
<div class="a" style="left:516px;top:89px;width:252px;height:357px;background:#f9f9f9"></div>
<div class="a" style="left:513px;top:78px;width:1px;height:368px;background:#cfcfcf"></div><div class="a" style="left:515px;top:89px;width:1px;height:357px;background:#dedede"></div>
<div class="t bt" style="left:519px;top:97px"><i>光</i><i>斑</i><i>序</i><i>号</i></div>
<div class="a" style="left:550px;top:94px;width:26px;height:12px;background:#fff;border:1px solid #ececec"></div>
<div class="t bt" style="left:552px;top:96px;font-size:8px">0</div><svg class="a" style="left:569.5px;top:97.0px" width="4" height="3" viewBox="0 0 4 3"><path d="M.4 .7L2 2.3l1.6-1.6" fill="none" stroke="#888" stroke-width="0.8"/></svg>
<div class="a btn" style="left:579px;top:94px;width:44px;height:12px;background:#fff"></div><div class="t bt" style="left:587px;top:97px"><i>清</i><i>除</i><i>数</i><i>据</i></div>
<div class="a" style="left:626px;top:94px;width:36px;height:13px;background:#cde5f8;border:1px solid #9cc8ea;border-radius:2px"></div><div class="t bt" style="left:630px;top:97px"><i>启</i><i>用</i><i>计</i><i>算</i></div>
<div class="a btn" style="left:665px;top:94px;width:36px;height:12px;background:#fff"></div><div class="t bt" style="left:669px;top:97px"><i>断</i><i>点</i><i>采</i><i>集</i></div>
<div class="t bt" style="left:519px;top:113px"><i>统</i><i>计</i><i>方</i><i>式</i></div>
<div class="a" style="left:550px;top:111px;width:54px;height:12px;background:#fff;border:1px solid #f0f0f0"></div>
<div class="t bt" style="left:552px;top:113px"><i>统</i><i>计</i><i>时</i><i>长</i><i>（</i>s<i>）</i></div><svg class="a" style="left:598.5px;top:114.0px" width="4" height="3" viewBox="0 0 4 3"><path d="M.4 .7L2 2.3l1.6-1.6" fill="none" stroke="#888" stroke-width="0.8"/></svg>
<div class="a" style="left:606px;top:110px;width:56px;height:13px;background:#fff;border:1px solid #e8e8e8"></div>
<div class="t bt" style="left:608px;top:113px;font-size:8px;color:#111">10</div>
<svg class="a" style="left:655.5px;top:112.0px" width="4" height="3" viewBox="0 0 4 3"><path d="M.4 2.3L2 .7l1.6 1.6" fill="none" stroke="#333" stroke-width="0.8"/></svg><svg class="a" style="left:655.5px;top:117.0px" width="4" height="3" viewBox="0 0 4 3"><path d="M.4 .7L2 2.3l1.6-1.6" fill="none" stroke="#333" stroke-width="0.8"/></svg>
<div class="a" style="left:518px;top:126px;width:246px;height:317px;background:#fff;border:1px solid #e3e3e3"></div>
<div class="t bt" style="left:522px;top:131px;color:#111"><i>名</i><i>称</i></div>
<div class="t bt" style="left:587px;top:131px;color:#111"><i>单</i><i>位</i></div>
<div class="t bt" style="left:615px;top:131px;color:#111"><i>值</i></div>
<div class="a" style="left:658px;top:128px;width:1px;height:11px;background:#f4f4f4"></div>
<div class="a" style="left:703px;top:128px;width:1px;height:11px;background:#f4f4f4"></div>
<div class="a" style="left:746px;top:128px;width:1px;height:11px;background:#f4f4f4"></div>
<div class="a" style="left:660.5px;top:134px;width:3.5px;height:0.8px;background:#777"></div><div class="a" style="left:665.0px;top:134px;width:3.5px;height:0.8px;background:#777"></div>
<div class="a" style="left:705.5px;top:134px;width:3.5px;height:0.8px;background:#777"></div><div class="a" style="left:710.0px;top:134px;width:3.5px;height:0.8px;background:#777"></div>
<div class="a" style="left:750px;top:134px;width:3.5px;height:0.8px;background:#777"></div><div class="a" style="left:754.5px;top:134px;width:3.5px;height:0.8px;background:#777"></div>
<!--T-->
<svg class="a" style="left:521px;top:146.0px" width="5" height="3" viewBox="0 0 5 3"><path d="M.5.5l2 2 2-2" fill="none" stroke="#666" stroke-width="0.9"/></svg><div class="t bt" style="left:529.5px;top:143.5px"><i>功</i><i>率</i>/<i>能</i><i>量</i></div><div class="a" style="left:580.5px;top:149.0px;width:0;height:0;border-left:2.5px solid transparent;border-right:2.5px solid transparent;border-top:3px solid #111"></div>
<div class="a" style="left:537px;top:153.84px;width:226px;height:11.6px;background:#d9d9d9"></div><div class="t bt" style="left:538.5px;top:155.6px"><i>全</i><i>图</i><i>总</i><i>幅</i><i>值</i></div><div class="t" style="left:615px;top:155.4px;font-size:8px">3.989e+06</div>
<div class="t bt" style="left:538.5px;top:167.8px"><i>全</i><i>图</i><i>总</i><i>面</i><i>积</i></div><div class="t" style="left:587.5px;top:167.6px;font-size:8px">µm²</div><div class="t" style="left:615px;top:167.6px;font-size:8px">3.371e+06</div>
<div class="a" style="left:537px;top:178.12px;width:226px;height:11.6px;background:#d9d9d9"></div><div class="t bt" style="left:538.5px;top:179.9px"><i>全</i><i>图</i><i>功</i><i>率</i></div><div class="t" style="left:587.5px;top:179.7px;font-size:8px">W</div><div class="t" style="left:615px;top:179.7px;font-size:8px">3.989e+06</div>
<div class="t bt" style="left:538.5px;top:192.1px"><i>光</i><i>斑</i><i>总</i><i>幅</i><i>值</i></div><div class="t" style="left:615px;top:191.9px;font-size:8px">3.985e+06</div>
<div class="a" style="left:537px;top:202.40px;width:226px;height:11.6px;background:#d9d9d9"></div><div class="t bt" style="left:538.5px;top:204.2px">D4σ<i>面</i><i>积</i></div><div class="t" style="left:587.5px;top:204.0px;font-size:8px">µm²</div><div class="t" style="left:615px;top:204.0px;font-size:8px">1.488e+05</div>
<div class="t bt" style="left:538.5px;top:216.3px">ROI<i>总</i><i>幅</i><i>值</i></div><div class="t" style="left:615px;top:216.1px;font-size:8px">3.985e+06</div>
<div class="a" style="left:537px;top:226.68px;width:226px;height:11.6px;background:#d9d9d9"></div><div class="t bt" style="left:538.5px;top:228.5px">ROI<i>总</i><i>面</i><i>积</i></div><div class="t" style="left:587.5px;top:228.3px;font-size:8px">µm²</div><div class="t" style="left:615px;top:228.3px;font-size:8px">2.650e+06</div>
<div class="t bt" style="left:538.5px;top:240.6px">ROI<i>功</i><i>率</i></div><div class="t" style="left:587.5px;top:240.4px;font-size:8px">W</div><div class="t" style="left:615px;top:240.4px;font-size:8px">3.985e+06</div>
<div class="a" style="left:537px;top:250.96px;width:226px;height:11.6px;background:#d9d9d9"></div><div class="t bt" style="left:538.5px;top:252.8px"><i>峰</i><i>值</i></div><div class="t" style="left:615px;top:252.6px;font-size:8px">244.000</div>
<div class="t bt" style="left:538.5px;top:264.9px"><i>最</i><i>小</i><i>值</i></div><div class="t" style="left:615px;top:264.7px;font-size:8px">0.000</div>
<svg class="a" style="left:521px;top:279.5px" width="5" height="3" viewBox="0 0 5 3"><path d="M.5.5l2 2 2-2" fill="none" stroke="#666" stroke-width="0.9"/></svg><div class="t bt" style="left:529.5px;top:277.0px"><i>空</i><i>间</i></div><div class="a" style="left:580.5px;top:282.5px;width:0;height:0;border-left:2.5px solid transparent;border-right:2.5px solid transparent;border-top:3px solid #111"></div>
<div class="a" style="left:537px;top:287.38px;width:226px;height:11.6px;background:#d9d9d9"></div><div class="t bt" style="left:538.5px;top:289.2px">D4σX</div><div class="t" style="left:587.5px;top:289.0px;font-size:8px">µm</div><div class="t" style="left:615px;top:289.0px;font-size:8px">435.283</div>
<div class="t bt" style="left:538.5px;top:301.3px">D4σY</div><div class="t" style="left:587.5px;top:301.1px;font-size:8px">µm</div><div class="t" style="left:615px;top:301.1px;font-size:8px">435.359</div>
<div class="a" style="left:537px;top:311.66px;width:226px;height:11.6px;background:#d9d9d9"></div><div class="t bt" style="left:538.5px;top:313.5px">D4σ</div><div class="t" style="left:587.5px;top:313.3px;font-size:8px">µm</div><div class="t" style="left:615px;top:313.3px;font-size:8px">435.321</div>
<div class="t bt" style="left:538.5px;top:325.6px">D4σ<i>椭</i><i>圆</i><i>率</i></div><div class="t" style="left:615px;top:325.4px;font-size:8px">1.000</div>
<div class="a" style="left:537px;top:335.94px;width:226px;height:11.6px;background:#d9d9d9"></div><div class="t bt" style="left:538.5px;top:337.7px">DpkX</div><div class="t" style="left:587.5px;top:337.5px;font-size:8px">µm</div><div class="t" style="left:615px;top:337.5px;font-size:8px">451.000</div>
<div class="t bt" style="left:538.5px;top:349.9px">DpkY</div><div class="t" style="left:587.5px;top:349.7px;font-size:8px">µm</div><div class="t" style="left:615px;top:349.7px;font-size:8px">453.200</div>
<div class="a" style="left:537px;top:360.22px;width:226px;height:11.6px;background:#d9d9d9"></div><div class="t bt" style="left:538.5px;top:362.0px">Dpk</div><div class="t" style="left:587.5px;top:361.8px;font-size:8px">µm</div><div class="t" style="left:615px;top:361.8px;font-size:8px">463.371</div>
<div class="t bt" style="left:538.5px;top:374.2px">Dpk<i>椭</i><i>圆</i><i>率</i></div><div class="t" style="left:615px;top:374.0px;font-size:8px">0.995</div>
<div class="t" style="left:529.5px;top:386.1px;font-size:8px">1D Top hat</div>
<div class="a" style="left:580.5px;top:392.3px;width:0;height:0;border-left:2.5px solid transparent;border-right:2.5px solid transparent;border-top:3px solid #111"></div>
<div class="a" style="left:519px;top:396.44px;width:244px;height:12px;background:#f3f3f3"></div>
<div class="t" style="left:529.5px;top:398.2px;font-size:8px">2D Top hat</div>
<div class="a" style="left:580.5px;top:404.4px;width:0;height:0;border-left:2.5px solid transparent;border-right:2.5px solid transparent;border-top:3px solid #111"></div>
<div class="t" style="left:529.5px;top:410.4px;font-size:8px">3D</div>
<div class="a" style="left:580.5px;top:416.6px;width:0;height:0;border-left:2.5px solid transparent;border-right:2.5px solid transparent;border-top:3px solid #111"></div>
<div class="a" style="left:519px;top:436px;width:244px;height:5px;background:#f0f0f0"></div>
<div class="a" style="left:527px;top:437px;width:153px;height:3px;background:#858585;border-radius:1px"></div>
<!-- status bar -->
<div class="a" style="left:0;top:446px;width:768px;height:12px;background:#f9f9f9;border-top:1px solid #9a9a9a"></div>
<div class="t" style="left:1.7px;top:449px;font-size:7.5px;color:#222">835x834</div>
<div class="t" style="left:45.7px;top:449px;font-size:7.55px;color:#222">X:1.309553e+03um,Y:0.000000e+00um I:0; 0.00%</div>

<!-- toolbar icons -->
<div class="a" style="left:618.5px;top:17.5px;width:0;height:0;border-left:3px solid transparent;border-right:3px solid transparent;border-bottom:3px solid #111"></div>
<div class="a" style="left:632px;top:15px;width:7px;height:7.5px;background:#1a3f86"></div>
<div class="a" style="left:633.5px;top:16.5px;width:4px;height:4.5px;border-radius:50%;background:#6dbf3a"></div>
<div class="a" style="left:644px;top:12px;width:11px;height:14px;background:#d5e7f7;border:1px solid #a9cde9"></div>
<svg class="a" style="left:644.5px;top:13.5px" width="10" height="11" viewBox="0 0 10 11"><g transform="rotate(40 5 5.5)" fill="#1c2f4a"><rect x="2.8" y="0.3" width="4.4" height="1.4"/><rect x="3.6" y="1.7" width="2.8" height="3.3"/><path d="M1.8 5h6.4l-1 1.6H2.8z"/><rect x="4.6" y="6.6" width="0.8" height="4"/></g></svg>
<svg class="a" style="left:659.5px;top:15px" width="8" height="8" viewBox="0 0 8 8"><path d="M2 4V2.3A1.8 1.8 0 0 1 5.6 2.3" fill="none" stroke="#111" stroke-width="1.2"/><rect x="0.8" y="4" width="6.2" height="4" fill="#111"/><rect x="3.4" y="5.2" width="1" height="1.6" fill="#fff"/></svg>
<svg class="a" style="left:673px;top:14.5px" width="10" height="9" viewBox="0 0 10 9"><path d="M2 .5l6 6M8 .5l-6 6" stroke="#777" stroke-width="1"/><circle cx="2" cy="7.2" r="1.4" fill="none" stroke="#777" stroke-width="0.9"/><circle cx="8" cy="7.2" r="1.4" fill="none" stroke="#777" stroke-width="0.9"/></svg>
<svg class="a" style="left:687.5px;top:14px" width="8" height="10" viewBox="0 0 8 10"><path d="M0 0h5.5L8 2.5V10H0z" fill="#6f6f6f"/><path d="M2 3.5h3M2 5.5h4M2 7.5h3" stroke="#bbb" stroke-width="0.7"/></svg>
<svg class="a" style="left:701.5px;top:15px" width="8" height="8" viewBox="0 0 8 8"><circle cx="4" cy="4" r="3.3" fill="none" stroke="#111" stroke-width="1.1"/><path d="M2.8 3.1a1.2 1.2 0 1 1 1.7 1.1c-.4.2-.5.4-.5.8" fill="none" stroke="#111" stroke-width="0.9"/><circle cx="4" cy="6.1" r=".5" fill="#111"/></svg>
<div class="t" style="left:714px;top:15px;font-size:7px;color:#555"><i>语</i><i>言</i></div>
<div class="a" style="left:731px;top:12px;width:35px;height:13px;background:#fdfdfd;border:1px solid #f3f3f3"></div>
<div class="t" style="left:733px;top:15px;font-size:7px;color:#222"><i>中</i><i>文</i></div>
<svg class="a" style="left:760.5px;top:17.0px" width="4" height="3" viewBox="0 0 4 3"><path d="M.4 .7L2 2.3l1.6-1.6" fill="none" stroke="#888" stroke-width="0.8"/></svg>
<!-- dock icons -->
<svg class="a" style="left:490px;top:79px" width="10" height="10" viewBox="0 0 10 10"><rect x="0.5" y="3" width="6.5" height="6.5" fill="#fff" stroke="#333" stroke-width="0.9"/><path d="M2.5 3V0.8h6.7v6.7H7" fill="none" stroke="#333" stroke-width="0.9"/></svg>
<svg class="a" style="left:503.5px;top:81px" width="7" height="6" viewBox="0 0 7 6"><path d="M.7.3l5.6 5.4M6.3.3L.7 5.7" stroke="#111" stroke-width="1.2"/></svg>
<svg class="a" style="left:746px;top:79px" width="10" height="10" viewBox="0 0 10 10"><rect x="0.5" y="3" width="6.5" height="6.5" fill="#fff" stroke="#333" stroke-width="0.9"/><path d="M2.5 3V0.8h6.7v6.7H7" fill="none" stroke="#333" stroke-width="0.9"/></svg>
<svg class="a" style="left:759.5px;top:81px" width="6" height="6" viewBox="0 0 6 6"><path d="M.5.5l5 5M5.5.5l-5 5" stroke="#111" stroke-width="1.1"/></svg>
<!-- status right -->
<div class="t" style="left:681px;top:449px;font-size:7.5px;color:#333">fps:0.0</div>
<div class="a" style="left:712px;top:451.5px;width:34px;height:1.5px;background:#e4e4e4"></div>
<div class="a" style="left:708px;top:449.5px;width:4.5px;height:6px;background:#1f78d1;border-radius:1px"></div>
<div class="a" style="left:746px;top:447px;width:22px;height:11px;background:#fff"></div>
<div class="t" style="left:755px;top:449px;font-size:8px;color:#333">0</div>
</body></html>
